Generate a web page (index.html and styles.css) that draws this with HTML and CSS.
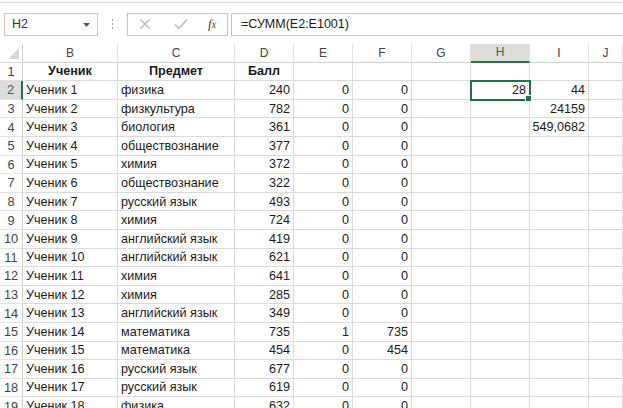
FILE: index.html
```html
<!DOCTYPE html>
<html lang="ru">
<head>
<meta charset="utf-8">
<title>Excel</title>
<link rel="stylesheet" href="styles.css">
</head>
<body>
<div class="app">
  <div class="topline"></div>
  <div class="toolbar">
    <div class="namebox">
      <span class="nb-text">H2</span>
      <svg class="nb-arrow" width="7" height="4" viewBox="0 0 7 4"><path d="M0 0H7L3.5 4Z" fill="#555"/></svg>
    </div>
    <div class="dots"><span></span><span></span><span></span></div>
    <div class="fbuttons">
      <svg class="ic" width="12" height="12" viewBox="0 0 12 12"><path d="M1.5 1.5L10.5 10.5M10.5 1.5L1.5 10.5" stroke="#b4b4b4" stroke-width="1.3" fill="none"/></svg>
      <svg class="ic" width="14" height="12" viewBox="0 0 14 12"><path d="M1 6.5L5 10.5L13 1.5" stroke="#b4b4b4" stroke-width="1.3" fill="none"/></svg>
      <span class="fx"><i>f</i><span class="fx-x">x</span></span>
    </div>
    <div class="formula">=СУММ(E2:E1001)</div>
  </div>
  <div class="sheet" id="sheet"></div>
</div>
<script src="app.js"></script>
</body>
</html>
```

FILE: app.js
```js
var cols = ['B','C','D','E','F','G','H','I','J'];
var rows = [
  ['Ученик 1','физика',240,0,0,'','28','44'],
  ['Ученик 2','физкультура',782,0,0,'','','24159'],
  ['Ученик 3','биология',361,0,0,'','','549,0682'],
  ['Ученик 4','обществознание',377,0,0],
  ['Ученик 5','химия',372,0,0],
  ['Ученик 6','обществознание',322,0,0],
  ['Ученик 7','русский язык',493,0,0],
  ['Ученик 8','химия',724,0,0],
  ['Ученик 9','английский язык',419,0,0],
  ['Ученик 10','английский язык',621,0,0],
  ['Ученик 11','химия',641,0,0],
  ['Ученик 12','химия',285,0,0],
  ['Ученик 13','английский язык',349,0,0],
  ['Ученик 14','математика',735,1,735],
  ['Ученик 15','математика',454,0,454],
  ['Ученик 16','русский язык',677,0,0],
  ['Ученик 17','русский язык',619,0,0],
  ['Ученик 18','физика',632,0,0]
];
var s = document.getElementById('sheet');
function cell(cls, txt) {
  var d = document.createElement('div');
  d.className = cls;
  d.textContent = txt;
  s.appendChild(d);
  return d;
}
cell('corner', '');
cols.forEach(function (c) { cell('colhdr' + (c === 'H' ? ' sel' : ''), c); });
cell('rowhdr', '1');
cell('c bold center', 'Ученик');
cell('c bold center', 'Предмет');
cell('c bold center', 'Балл');
for (var k = 0; k < 6; k++) cell('c', '');
rows.forEach(function (r, i) {
  var n = i + 2;
  cell('rowhdr' + (n === 2 ? ' sel' : ''), String(n));
  cell('c', r[0]);
  cell('c', r[1]);
  cell('c num', r[2]);
  cell('c num', r[3]);
  cell('c num', r[4]);
  cell('c num', '');
  cell('c num' + (n === 2 ? ' active' : ''), r[6] || '');
  cell('c num', r[7] || '');
  cell('c', '');
});
```

FILE: styles.css
```css
* { box-sizing: border-box; }
html, body { margin: 0; padding: 0; background: #fff; }
body {
  width: 623px;
  height: 408px;
  overflow: hidden;
  font-family: "Liberation Sans", Arial, sans-serif;
  color: #1a1a1a;
}
.app { display: flex; flex-direction: column; }
.topline { height: 3px; border-bottom: 1px solid #d6d6d6; margin-top: 0; }
.toolbar {
  display: flex;
  align-items: center;
  height: 41px;
  padding: 8px 0 7px 4px;
}
.namebox {
  width: 94px;
  height: 23px;
  border: 1px solid #c6c6c6;
  display: flex;
  align-items: center;
  justify-content: space-between;
  padding: 0 7px 0 7px;
  font-size: 12.5px;
  color: #333;
}
.nb-arrow { margin-top: 1px; }
.dots {
  width: 29px;
  display: flex;
  flex-direction: column;
  align-items: center;
  gap: 2px;
}
.dots span { width: 1px; height: 2px; background: #9a9a9a; }
.fbuttons {
  width: 101px;
  height: 23px;
  border: 1px solid #c6c6c6;
  display: flex;
  align-items: center;
  padding-left: 11px;
  gap: 0;
}
.fbuttons .ic:first-child { margin-right: 23px; }
.fbuttons .ic:nth-child(2) { margin-right: 20px; }
.fx { font-family: "Liberation Serif", serif; font-size: 13px; color: #444; }
.fx i { font-style: italic; }
.fx-x { font-style: italic; font-size: 10px; }
.formula {
  flex: 1;
  margin-left: 3px;
  height: 23px;
  border: 1px solid #c6c6c6;
  border-right: none;
  display: flex;
  align-items: center;
  padding-left: 9px;
  font-size: 12.5px;
  color: #1a1a1a;
}
.sheet {
  display: grid;
  grid-template-columns: 23px 95px 117px 59px 59px 59px 59px 59px 59px 1fr;
  grid-auto-rows: 18.6px;
  font-size: 12.6px;
}
.sheet > div {
  border-right: 1px solid #dadada;
  border-bottom: 1px solid #dadada;
  white-space: nowrap;
  overflow: visible;
  display: flex;
  align-items: center;
  padding: 0 3px;
}
.corner { position: relative; border-right-color: #cfcfcf !important; }
.corner::after {
  content: "";
  position: absolute;
  right: 3px;
  bottom: 3px;
  width: 0;
  height: 0;
  border-left: 11px solid transparent;
  border-bottom: 11px solid #d9d9d9;
}
.colhdr {
  justify-content: center;
  color: #444;
  font-size: 12px;
  border-bottom-color: #cfcfcf !important;
  border-right-color: #e3e3e3 !important;
}
.colhdr.sel {
  background: #dcdcdc;
  color: #217346;
  border-bottom: 2px solid #217346 !important;
}
.rowhdr {
  justify-content: center;
  color: #444;
  font-size: 12.8px;
  padding: 0 !important;
  border-right-color: #cfcfcf !important;
  border-bottom-color: #e3e3e3 !important;
}
.rowhdr.sel {
  background: #dcdcdc;
  color: #217346;
  border-right: 2px solid #217346 !important;
}
.c.bold { font-weight: bold; }
.c.center { justify-content: center; }
.c.num { justify-content: flex-end; }
.c.active {
  position: relative;
  outline: 2px solid #217346;
  outline-offset: -1px;
  z-index: 2;
}
.c.active::after {
  content: "";
  position: absolute;
  right: -3px;
  bottom: -3px;
  width: 5px;
  height: 5px;
  background: #217346;
  border: 1px solid #fff;
}
```
